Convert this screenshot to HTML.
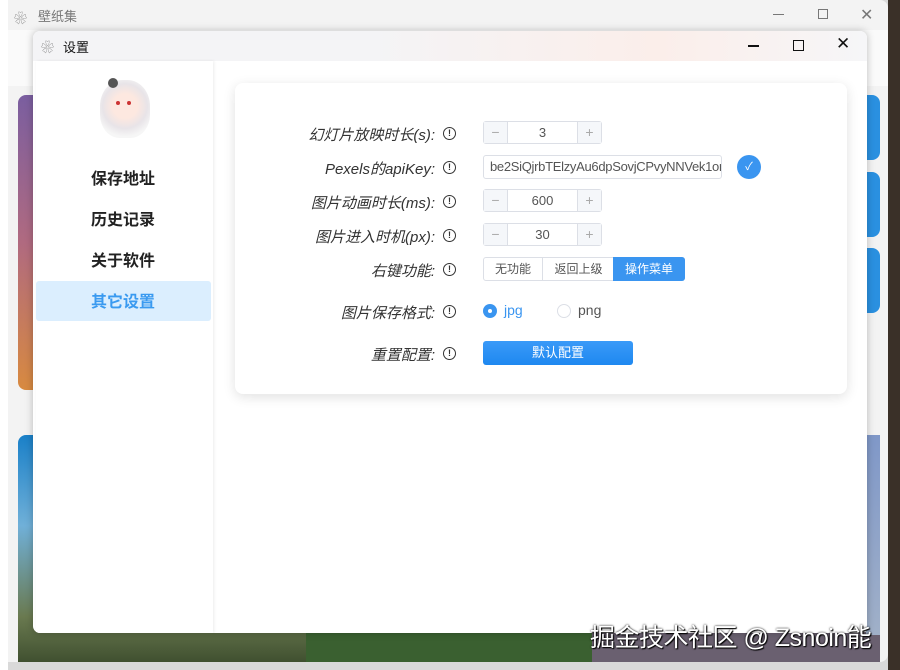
<!DOCTYPE html>
<html><head><meta charset="utf-8"><style>
*{margin:0;padding:0;box-sizing:border-box}
body{width:900px;height:670px;overflow:hidden;background:#d9d9d9;font-family:"Liberation Sans","Noto Sans CJK SC",sans-serif;position:relative}
.abs{position:absolute}
.lbl{position:absolute;right:465px;font-style:italic;font-size:15px;color:#333;text-align:right;white-space:nowrap}
.info{position:absolute;left:443px;width:13px;height:13px;border:1.3px solid #333;border-radius:50%;font-size:9px;line-height:10px;text-align:center;color:#333;font-weight:bold}
.num{position:absolute;left:483px;width:119px;height:23px;border:1px solid #dcdfe6;border-radius:3px;background:#fff;font-size:13px;color:#555}
.num .m,.num .p{position:absolute;top:0;width:24px;height:21px;background:#f5f7fa;color:#aaa;text-align:center;line-height:21px;font-size:14px}
.num .m{left:0;border-right:1px solid #dcdfe6}
.num .p{right:0;border-left:1px solid #dcdfe6}
.num .v{position:absolute;left:24px;right:24px;text-align:center;line-height:21px}
</style></head><body>
<div class="abs" style="left:0;top:0;width:888px;height:662px;background:#f3f3f3;border-radius:0 8px 8px 0"></div>
<div class="abs" style="left:888px;top:0;width:12px;height:670px;background:#3a3028"></div>
<div class="abs" style="left:14px;top:8px;font-size:13px;color:#888">❀</div>
<div class="abs" style="left:38px;top:6px;font-size:13px;color:#777">壁纸集</div>
<div class="abs" style="left:773px;top:14px;width:11px;height:1px;background:#777"></div>
<div class="abs" style="left:818px;top:9px;width:10px;height:10px;border:1px solid #777"></div>
<div class="abs" style="left:860px;top:5px;font-size:16px;color:#777">✕</div>
<div class="abs" style="left:0;top:30px;width:888px;height:56px;background:#fafafa"></div>
<div class="abs" style="left:0;top:0;width:8px;height:670px;background:#fff"></div>
<div class="abs" style="left:18px;top:95px;width:290px;height:295px;border-radius:8px;background:linear-gradient(180deg,#7a5ea0,#b06a80 50%,#d88a40)"></div>
<div class="abs" style="left:18px;top:435px;width:290px;height:227px;border-radius:8px 0 0 0;background:linear-gradient(180deg,#1a80c8,#70b0d8 40%,#6a7a50 80%,#405030)"></div>
<div class="abs" style="left:306px;top:632px;width:286px;height:30px;background:#3a6030"></div>
<div class="abs" style="left:592px;top:632px;width:288px;height:30px;background:#6a6070"></div>
<div class="abs" style="left:866px;top:95px;width:14px;height:65px;border-radius:0 8px 8px 0;background:#2a90e0"></div>
<div class="abs" style="left:866px;top:172px;width:14px;height:65px;border-radius:0 8px 8px 0;background:#2a90e0"></div>
<div class="abs" style="left:866px;top:248px;width:14px;height:65px;border-radius:0 8px 8px 0;background:#2a90e0"></div>
<div class="abs" style="left:866px;top:435px;width:14px;height:200px;background:linear-gradient(#8098c8,#a0b0c8)"></div>
<div class="abs" style="left:33px;top:31px;width:834px;height:602px;background:#fff;border-radius:7px;box-shadow:0 0 8px rgba(0,0,0,.25);overflow:hidden">
 <div class="abs" style="left:0;top:0;width:834px;height:30px;background:linear-gradient(90deg,#f4f4f6 40%,#fbeeea 75%,#f6f6f8)"></div>
 <div class="abs" style="left:8px;top:6px;font-size:13px;color:#888">❀</div>
 <div class="abs" style="left:30px;top:6px;font-size:13px;color:#111">设置</div>
 <div class="abs" style="left:715px;top:14px;width:11px;height:1.5px;background:#111"></div>
 <div class="abs" style="left:760px;top:9px;width:11px;height:11px;border:1.5px solid #111"></div>
 <div class="abs" style="left:803px;top:3px;font-size:17px;color:#111">✕</div>
 <div class="abs" style="left:3px;top:30px;width:177px;height:572px;background:#fff;box-shadow:1px 0 3px rgba(0,0,0,.08)"></div>
</div>
<div class="abs" style="left:100px;top:80px;width:50px;height:58px;border-radius:45% 45% 40% 40%;background:radial-gradient(circle at 50% 45%,#fde8e0 30%,#e8e4e8 55%,#f6f6f6 75%)"></div>
<div class="abs" style="left:108px;top:78px;width:10px;height:10px;border-radius:50%;background:#555"></div>
<div class="abs" style="left:116px;top:101px;width:4px;height:4px;border-radius:50%;background:#c33"></div>
<div class="abs" style="left:127px;top:101px;width:4px;height:4px;border-radius:50%;background:#c33"></div>
<div class="abs" style="left:36px;top:281px;width:175px;height:40px;background:#dbeefe;border-radius:3px"></div>
<div class="abs" style="left:91px;top:169px;font-size:16px;font-weight:bold;color:#222;line-height:22px">保存地址</div>
<div class="abs" style="left:91px;top:210px;font-size:16px;font-weight:bold;color:#222;line-height:22px">历史记录</div>
<div class="abs" style="left:91px;top:251px;font-size:16px;font-weight:bold;color:#222;line-height:22px">关于软件</div>
<div class="abs" style="left:91px;top:292px;font-size:16px;font-weight:bold;color:#3a9af0;line-height:22px">其它设置</div>
<div class="abs" style="left:235px;top:83px;width:612px;height:311px;background:#fff;border-radius:8px;box-shadow:0 3px 12px rgba(0,0,0,.12)"></div>
<div class="lbl" style="top:124px">幻灯片放映时长(s):</div>
<div class="lbl" style="top:158px">Pexels的apiKey:</div>
<div class="lbl" style="top:192px">图片动画时长(ms):</div>
<div class="lbl" style="top:226px">图片进入时机(px):</div>
<div class="lbl" style="top:260px">右键功能:</div>
<div class="lbl" style="top:302px">图片保存格式:</div>
<div class="lbl" style="top:344px">重置配置:</div>
<div class="info" style="top:127px">!</div><div class="info" style="top:161px">!</div><div class="info" style="top:195px">!</div><div class="info" style="top:229px">!</div><div class="info" style="top:263px">!</div><div class="info" style="top:305px">!</div><div class="info" style="top:347px">!</div>
<div class="num" style="top:121px"><div class="m">−</div><div class="v">3</div><div class="p">+</div></div>
<div class="abs" style="left:483px;top:155px;width:239px;height:24px;border:1px solid #dcdfe6;border-radius:3px;font-size:13px;letter-spacing:-0.3px;color:#555;line-height:22px;padding-left:6px;overflow:hidden;white-space:nowrap">be2SiQjrbTElzyAu6dpSovjCPvyNNVek1or</div>
<div class="abs" style="left:737px;top:155px;width:24px;height:24px;border-radius:50%;background:#3a95f0;color:#fff;font-size:11px;text-align:center;line-height:24px">✓</div>
<div class="num" style="top:189px"><div class="m">−</div><div class="v">600</div><div class="p">+</div></div>
<div class="num" style="top:223px"><div class="m">−</div><div class="v">30</div><div class="p">+</div></div>
<div class="abs" style="left:483px;top:257px;width:202px;height:24px;border:1px solid #dcdfe6;border-radius:3px;font-size:12px;color:#555;line-height:22px">
 <span class="abs" style="left:0;width:59px;text-align:center;border-right:1px solid #dcdfe6;height:22px">无功能</span>
 <span class="abs" style="left:59px;width:71px;text-align:center">返回上级</span>
 <span class="abs" style="left:129px;top:-1px;width:72px;height:24px;line-height:24px;text-align:center;background:#3a95f0;color:#fff;border-radius:0 3px 3px 0">操作菜单</span>
</div>
<div class="abs" style="left:483px;top:304px;width:14px;height:14px;border-radius:50%;background:#3a95f0"><div class="abs" style="left:5px;top:5px;width:4px;height:4px;border-radius:50%;background:#fff"></div></div>
<div class="abs" style="left:504px;top:302px;font-size:14px;color:#3a95f0">jpg</div>
<div class="abs" style="left:557px;top:304px;width:14px;height:14px;border-radius:50%;border:1px solid #dcdfe6"></div>
<div class="abs" style="left:578px;top:302px;font-size:14px;color:#555">png</div>
<div class="abs" style="left:483px;top:341px;width:150px;height:24px;border-radius:3px;background:linear-gradient(#3a9af8,#1e88f0);color:#fff;font-size:13px;text-align:center;line-height:24px">默认配置</div>
<div class="abs" style="left:590px;top:618px;font-size:25px;letter-spacing:-0.5px;color:#fff;text-shadow:0 0 2px #000,1px 1px 1px #000;white-space:nowrap">掘金技术社区 @ Zsnoin能</div>
</body></html>
